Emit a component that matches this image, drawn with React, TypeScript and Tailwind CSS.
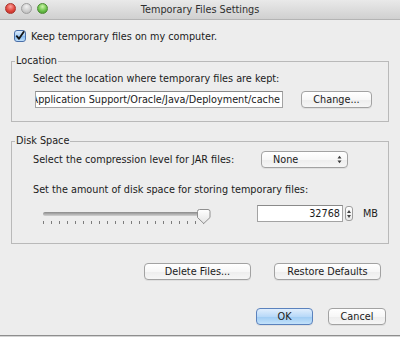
import React from 'react';

// Aqua-style push button
const PushButton: React.FC<{ className?: string; primary?: boolean; children: React.ReactNode }> = ({
  className = '',
  primary = false,
  children,
}) => (
  <button
    className={`flex h-[17px] items-center justify-center rounded-[4px] border text-[9.7px] leading-none text-[#1a1a1a] shadow-[0_1px_0_rgba(0,0,0,0.06)] ${
      primary
        ? 'border-[#5b82bd] bg-[linear-gradient(#e0eefd,#b9d9f8_50%,#9ecbf3_51%,#c3e2fb)]'
        : 'border-[#a2a2a2] bg-[linear-gradient(#ffffff,#f7f7f7_50%,#ededed_51%,#f6f6f6)]'
    } ${className}`}
  >
    {children}
  </button>
);

const TrafficLights: React.FC = () => (
  <div className="flex items-start gap-[5px] pl-[5px] pt-[3px]">
    <span className="h-[11px] w-[11px] rounded-full border border-[#a8352e] bg-[radial-gradient(circle_at_50%_30%,#fba39d,#e0463d_55%,#b8271f)]" />
    <span className="h-[11px] w-[11px] rounded-full border border-[#9d9d9d] bg-[radial-gradient(circle_at_50%_30%,#f1f1f1,#cfcfcf_55%,#b3b3b3)]" />
    <span className="h-[11px] w-[11px] rounded-full border border-[#4d8a33] bg-[radial-gradient(circle_at_50%_30%,#cdf5a9,#6cc24b_55%,#3f9226)]" />
  </div>
);

const Slider: React.FC = () => {
  const ticks = Array.from({ length: 21 }, (_, i) => 1 + i * 8);
  return (
    <svg width="170" height="18" viewBox="0 0 170 18" className="mt-[2px] block">
      <defs>
        <linearGradient id="track" x1="0" y1="0" x2="0" y2="1">
          <stop offset="0" stopColor="#8a8a8a" />
          <stop offset="0.45" stopColor="#a9a9a9" />
          <stop offset="1" stopColor="#d2d2d2" />
        </linearGradient>
        <linearGradient id="thumb" x1="0" y1="0" x2="0" y2="1">
          <stop offset="0" stopColor="#ffffff" />
          <stop offset="1" stopColor="#e4e4e4" />
        </linearGradient>
      </defs>
      <rect x="1" y="5" width="160" height="4" rx="2" fill="url(#track)" />
      {ticks.map((x) => (
        <rect key={x} x={x} y="14" width="1" height="3" fill="#7d7d7d" />
      ))}
      <path
        d="M155.5 4.5 Q155.5 2.5 157.5 2.5 H166 Q168 2.5 168 4.5 V10.5 L161.75 16.5 L155.5 10.5 Z"
        fill="url(#thumb)"
        stroke="#8f8f8f"
      />
    </svg>
  );
};

const App: React.FC = () => {
  return (
    <div className="flex h-[337px] w-[400px] flex-col overflow-hidden bg-[#ededed] font-['DejaVu_Sans',sans-serif] text-[9.7px] leading-[13px] text-[#1b1b1b]">
      {/* Title bar */}
      <div className="grid h-[20px] grid-cols-[1fr_auto_1fr] border-b border-[#b4b4b4] bg-[linear-gradient(#e9e9e9,#d0d0d0)]">
        <TrafficLights />
        <div className="flex items-center text-[#2f2f2f]">Temporary Files Settings</div>
        <div />
      </div>

      <div className="flex flex-1 flex-col px-[11px]">
        {/* Keep files checkbox */}
        <label className="mt-[10px] flex h-[12px] items-center gap-[5px] pl-[3px]">
          <span className="flex h-[12px] w-[12px] items-center justify-center rounded-[3px] border border-[#4a6fa8] bg-[linear-gradient(#dcebfc,#a6cdf4_50%,#80b6ee_51%,#bfdffb)]">
            <svg width="10" height="10" viewBox="0 0 10 10">
              <path d="M1.8 5.2 L4 7.8 L8.6 1" fill="none" stroke="#151515" strokeWidth="1.8" strokeLinecap="round" strokeLinejoin="round" />
            </svg>
          </span>
          <span>Keep temporary files on my computer.</span>
        </label>

        {/* Location */}
        <fieldset className="mt-[12px] border border-[#b9b9b9] pb-[13px]">
          <legend className="ml-[3px] px-[1px] leading-[14px]">Location</legend>
          <div className="mt-[4px] pl-[21px]">Select the location where temporary files are kept:</div>
          <div className="mt-[6px] flex items-center pl-[23px]">
            <div className="flex h-[17px] w-[248px] items-center justify-end overflow-hidden whitespace-nowrap border border-[#a3a3a3] border-t-[#8a8a8a] bg-white pr-[2px]">
              <span className="shrink-0">/Users/admin/Library/Application Support/Oracle/Java/Deployment/cache</span>
            </div>
            <PushButton className="ml-[18px] w-[71px]">Change...</PushButton>
          </div>
        </fieldset>

        {/* Disk Space */}
        <fieldset className="mt-[12px] border border-[#b9b9b9] pb-[18px]">
          <legend className="ml-[3px] px-[1px] leading-[14px]">Disk Space</legend>
          <div className="mt-[3px] flex items-center pl-[21px]">
            <span className="w-[228px]">Select the compression level for JAR files:</span>
            <PushButton className="w-[87px] !justify-between pl-[11px] pr-[5px]">
              <span>None</span>
              <svg width="5" height="9" viewBox="0 0 5 9">
                <path d="M0.5 3.5 L2.5 0.8 L4.5 3.5 Z M0.5 5.5 L2.5 8.2 L4.5 5.5 Z" fill="#3a3a3a" />
              </svg>
            </PushButton>
          </div>
          <div className="mt-[15px] pl-[21px]">Set the amount of disk space for storing temporary files:</div>
          <div className="mt-[9px] flex items-start pl-[30px]">
            <Slider />
            <div className="ml-[45px] flex h-[17px] w-[86px] items-center justify-end border border-[#a3a3a3] border-t-[#8a8a8a] bg-white pr-[2px]">
              32768
            </div>
            <div className="ml-[2px] mt-[1px] flex h-[15px] w-[8px] flex-col items-center justify-center gap-[2px] rounded-[3px] border border-[#9d9d9d] bg-[linear-gradient(#ffffff,#e9e9e9)]">
              <svg width="4" height="3" viewBox="0 0 4 3">
                <path d="M0 3 L2 0 L4 3 Z" fill="#444" />
              </svg>
              <svg width="4" height="3" viewBox="0 0 4 3">
                <path d="M0 0 L2 3 L4 0 Z" fill="#444" />
              </svg>
            </div>
            <span className="ml-[10px] flex h-[17px] items-center">MB</span>
          </div>
        </fieldset>

        {/* Maintenance buttons */}
        <div className="mt-[19px] flex justify-end gap-[23px] pr-[8px]">
          <PushButton className="w-[107px]">Delete Files...</PushButton>
          <PushButton className="w-[107px]">Restore Defaults</PushButton>
        </div>

        {/* Dialog buttons */}
        <div className="mt-[28px] flex justify-end gap-[15px] pr-[3px]">
          <PushButton primary className="w-[57px]">OK</PushButton>
          <PushButton className="w-[58px]">Cancel</PushButton>
        </div>
      </div>

      <div className="h-[2px] border-t border-[#8e8e8e] bg-[#d4d4d4]" />
    </div>
  );
};

export default App;
